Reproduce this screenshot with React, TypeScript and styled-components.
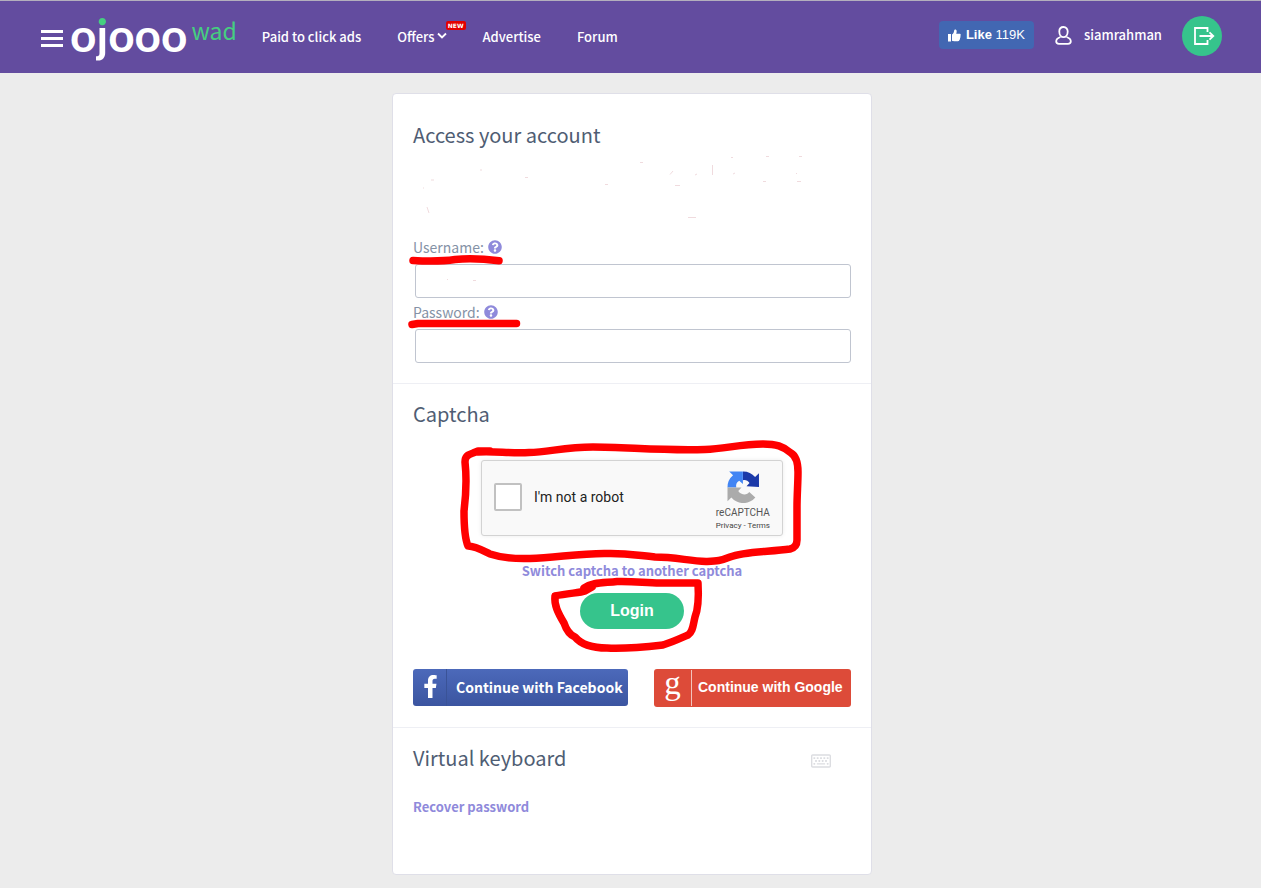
import React from "react";
import styled, { createGlobalStyle } from "styled-components";
import { FaFacebookF, FaQuestionCircle, FaRegKeyboard } from "react-icons/fa";

const sans = `"Source Sans Pro", "Noto Sans CJK JP", "Noto Sans", sans-serif`;
const arial = `"Liberation Sans", Arial, sans-serif`;
const violet = "#8f8adb";
const green = "#36c48c";

const GlobalStyle = createGlobalStyle`
  *, *::before, *::after { box-sizing: border-box; }
  body { margin: 0; background: #ececec; font-family: ${sans}; }
  button, input { font: inherit; margin: 0; }
  h2 { margin: 0; }
  a { text-decoration: none; }
`;

const Header = styled.header`
  display: flex;
  justify-content: space-between;
  height: 73px;
  padding: 0 39px 0 41px;
  border-top: 1px solid #b3afbd;
  background: #634c9f;
  color: #fff;
`;

const HeaderGroup = styled.div`
  display: flex;
  align-items: center;
`;

const MenuButton = styled.button`
  display: grid;
  gap: 4px;
  width: 22px;
  margin-top: 2px;
  padding: 0;
  border: 0;
  background: none;
  cursor: pointer;
`;

const MenuBar = styled.span`
  height: 3px;
  background: #fff;
`;

const Logo = styled.a`
  display: flex;
  align-items: flex-start;
  margin-left: 7px;
  padding-bottom: 4px;
  color: #fff;
`;

const LogoWord = styled.span`
  font: 700 46px/56px Lato, sans-serif;
`;

const LogoJ = styled.span`
  background: linear-gradient(#45cf80 0 21px, #fff 21px);
  background-clip: text;
  color: transparent;
`;

const LogoSuffix = styled.span`
  margin-left: 4px;
  color: #45cf80;
  font: 400 23px/46px ${sans};
`;

const Nav = styled.nav`
  display: flex;
  gap: 36px;
  margin-left: 25px;
`;

const NavLink = styled.a`
  position: relative;
  display: flex;
  align-items: center;
  gap: 2px;
  color: #fff;
  font-size: 13px;
  font-weight: 500;
  line-height: 20px;
`;

const NewBadge = styled.span`
  position: absolute;
  top: -6px;
  right: -19px;
  padding: 0 2px;
  border-radius: 2px;
  background: #e30000;
  font: 700 6px/9px "DejaVu Sans", sans-serif;
`;

const LikeButton = styled.button`
  display: flex;
  align-items: center;
  gap: 5px;
  height: 28px;
  margin-bottom: 4px;
  padding: 0 9px;
  border: 0;
  border-radius: 4px;
  background: #4267b2;
  color: #fff;
  font: 700 13px/20px ${arial};
  cursor: pointer;
`;

const LikeCount = styled.span`
  font-weight: 400;
`;

const UserLink = styled.a`
  display: flex;
  align-items: center;
  gap: 12px;
  margin: 0 20px 4px 21px;
  color: #fff;
  font-size: 13px;
  font-weight: 500;
  line-height: 20px;
`;

const LogoutButton = styled.button`
  display: grid;
  place-items: center;
  width: 40px;
  height: 40px;
  margin-bottom: 2px;
  padding: 0 0 0 4px;
  border: 0;
  border-radius: 50%;
  background: ${green};
  cursor: pointer;
`;

const Main = styled.main`
  padding: 20px 0 13px 3px;
`;

const Card = styled.form`
  position: relative;
  width: 100%;
  max-width: 480px;
  margin: 0 auto;
  border: 1px solid #dfdfe8;
  border-radius: 4px;
  background: #fff;
`;

const Section = styled.section<{ $top?: number; $bottom?: number }>`
  padding: ${(p) => p.$top ?? 16}px 20px ${(p) => p.$bottom ?? 20}px;
  & + & { border-top: 1px solid #eeeff4; }
`;

const Heading = styled.h2`
  color: #4f5d73;
  font-size: 20px;
  font-weight: 400;
  line-height: 28px;
`;

const HeadingRow = styled.div`
  display: flex;
  align-items: center;
  justify-content: space-between;
  padding-right: 20px;
  color: #dcdde1;
  svg { margin-top: 6px; }
`;

const Fields = styled.div`
  display: grid;
  gap: 2px;
  margin-top: 86px;
`;

const FieldLabel = styled.label`
  display: flex;
  align-items: center;
  gap: 4px;
  color: #8592a6;
  font-size: 14px;
  line-height: 24px;
  svg { color: ${violet}; }
`;

const TextInput = styled.input`
  display: block;
  width: calc(100% - 2px);
  height: 34px;
  margin: 5px 0 0 2px;
  padding: 0 10px;
  border: 1px solid #c0c5d0;
  border-radius: 3px;
  background: #fff;
`;

const Centered = styled.div`
  display: flex;
  flex-direction: column;
  align-items: center;
`;

const Captcha = styled.div`
  display: flex;
  align-items: center;
  justify-content: space-between;
  width: 302px;
  height: 76px;
  margin-top: 32px;
  padding: 0 12px;
  border: 1px solid #d3d3d3;
  border-radius: 3px;
  background: #f9f9f9;
  box-shadow: 0 0 4px rgba(0, 0, 0, 0.08);
  font-family: Roboto, sans-serif;
`;

const CaptchaLabel = styled.label`
  display: flex;
  align-items: center;
  gap: 12px;
  margin-bottom: 3px;
  color: #222;
  font-size: 14px;
  line-height: 20px;
`;

const CaptchaCheck = styled.input`
  appearance: none;
  width: 28px;
  height: 28px;
  border: 2px solid #c1c1c1;
  border-radius: 2px;
  background: #fff;
`;

const CaptchaBrand = styled.div`
  display: flex;
  flex-direction: column;
  align-items: center;
  padding-top: 5px;
  color: #555;
  font-size: 10px;
  line-height: 14px;
  svg { margin-bottom: 3px; }
`;

const CaptchaLegal = styled.div`
  font-size: 8px;
  line-height: 11px;
  a { color: #444; }
`;

const TextLink = styled.a`
  color: ${violet};
  font-size: 13px;
  font-weight: 700;
  line-height: 24px;
`;

const SwitchLink = styled(TextLink)`
  margin-top: 23px;
`;

const RecoverRow = styled.div`
  display: flex;
  margin-top: 23px;
`;

const LoginButton = styled.button`
  height: 36px;
  margin-top: 10px;
  padding: 0 30px;
  border: 0;
  border-radius: 18px;
  background: ${green};
  color: #fff;
  font: 700 16px/20px ${arial};
  cursor: pointer;
`;

const SocialRow = styled.div`
  display: flex;
  align-items: flex-start;
  justify-content: space-between;
  margin-top: 40px;
`;

const SocialButton = styled.button`
  display: flex;
  align-items: center;
  padding: 0;
  border: 0;
  border-radius: 3px;
  color: #fff;
  cursor: pointer;
`;

const FacebookButton = styled(SocialButton)`
  width: 215px;
  height: 37px;
  background: linear-gradient(#4c69ba, #3b55a0);
  font-size: 14px;
  font-weight: 700;
`;

const GoogleButton = styled(SocialButton)`
  width: 197px;
  height: 38px;
  background: #dd4b39;
  font: 700 14px/20px ${arial};
`;

const FacebookMark = styled.span`
  display: grid;
  place-items: center;
  width: 34px;
  height: 37px;
  margin-right: 9px;
  padding: 0 0 2px 2px;
  border-right: 1px solid #3a5397;
`;

const GoogleMark = styled.span`
  width: 38px;
  height: 36px;
  margin-right: 6px;
  border-right: 1px solid #f3c3bc;
  font: 400 33px/26px "Liberation Serif", serif;
`;

const ButtonText = styled.span`
  padding-bottom: 2px;
`;

const Markup = styled.svg`
  position: absolute;
  top: -1px;
  left: -1px;
  pointer-events: none;
`;

const UserIcon = () => (
  <svg width="17" height="19" viewBox="0 0 17 19" fill="none" stroke="#fff" strokeWidth="1.8" aria-hidden="true">
    <path d="M8.5 1C5.8 1 4.300 3 4.300 5.600C4.300 8.800 6.200 11.200 8.500 11.200S12.700 8.800 12.700 5.600C12.700 3 11.200 1 8.500 1Z" />
    <path d="M5.500 11C3 11.800 1.200 13 1.200 15.300C1.200 17.200 2.400 17.800 4 17.800H13C14.600 17.800 15.800 17.200 15.800 15.300C15.800 13 14 11.800 11.500 11" />
  </svg>
);

const LogoutIcon = () => (
  <svg width="22" height="18" viewBox="0 0 22 18" fill="none" stroke="#fff" strokeWidth="1.8" aria-hidden="true">
    <path d="M14.500 5V1H2V17H14.500V13" />
    <path d="M6.500 9H20M16.500 5.300L20.300 9L16.500 12.700" />
  </svg>
);

const LikeIcon = () => (
  <svg width="13" height="13" viewBox="0 0 13 13" fill="#fff" aria-hidden="true">
    <path d="M0 5H3V12.500H0ZM4 5.500C5.500 4.500 6 3.300 6.200 1.300C6.300 0 8.700 0 8.700 2.300C8.700 3.300 8.500 4 8.200 4.700H11.500C13 4.700 13.100 6.500 12.200 6.900C12.900 7.500 12.700 8.700 11.900 9C12.300 9.700 12 10.600 11.300 10.900C11.400 11.800 10.900 12.300 10 12.300H6.500C5.500 12.300 5 11.800 4 11.700Z" />
  </svg>
);

const RecaptchaIcon = () => (
  <svg width="32" height="32" viewBox="0 0 64 64" aria-hidden="true">
    <path fill="#1c3aa9" d="M64 32L63.900 4.500L56.200 12.200A31 31 0 0 0 32 1V18.500C35 17 42 18 45 24L39 30.500Z" />
    <path fill="#4285f4" d="M31.800 1H4.400L12.100 8.700A31 31 0 0 0 1 32.900H18.500C17.500 27 19 22 24.500 19.500L31.800 26Z" />
    <path fill="#ababab" d="M1 33V60.500L8.700 52.800A31 31 0 0 0 56.700 52.800L44.500 42C41 47 35 48.500 28 45C25.500 43.700 24 42 22.500 40L29 33Z" />
  </svg>
);

const Chevron = () => (
  <svg width="10" height="10" viewBox="0 0 10 10" fill="none" stroke="#fff" strokeWidth="1.8" aria-hidden="true">
    <path d="M1 1.500L5 5.500L9 1.500" />
  </svg>
);

/* Hand-drawn highlights over the form, plus the faint marks beside the heading. */
const Annotations = () => (
  <Markup width="480" height="782" viewBox="392 93 480 782" fill="none" stroke="#f00" strokeWidth="7.5" strokeLinecap="round" strokeLinejoin="round" aria-hidden="true">
    <path d="M413 260.500C432 261.500 445 261 455 259.500C470 258 485 259 499 260.800" />
    <path d="M412 324.500L418 323.500H516.500" />
    <path d="M490 451L478 451L473 453C467 455 465 457 465 462C467 480 466 495 464 511C464 525 465 539 468 546C475 546 482 550 490 554C502 558 515 559 530 558.500C555 558 580 553 607 553.500C625 553 635 555 655 557C675 557 689 561 706 561.500C717 561 720 561 730 557C745 551 770 552 790 549C794 548 797 545 797 540V507C797 495 798 483 798 472C798 462 796 456 791 453C783 446 776 444 763 444C740 444 725 449 705 449.500C665 451 625 447 593 447C565 447 549 452 529 452.500C510 453.500 495 451 478 452" />
    <path d="M584 588C592 582 604 583 617 581.500C635 581 645 583 660 583L698 583C699 600 697 612 695 617C693 625 693 632 688 635C681 638 673 642 663 645C645 647 625 649 607 648C590 648 580 643 575 637C570 635 566 629 564 623C558 613 554 605 555 596C568 593 580 593 585 591L592 587" />
    <g stroke="#d9a5ad" strokeWidth="1" strokeLinecap="butt" opacity="0.4">
      <path d="M431 180H434M423 188H424M480 170H482M525 177.500H528M605 184.500H608M640 162.500H643M670 174.500L673 171M695 175L697 174M712.500 165V175M731 157.500H733M733 174L735 173M766 156.500H769M763 181.500H766M799 156.500H802M797 181.500H801M796 173.500H797M675 185.500H680M688 217.500H696M427 207L429 213M447 279.500H448M473 280.500H476" />
    </g>
  </Markup>
);

const Field = ({ id, label, type }: { id: string; label: string; type: string }) => (
  <div>
    <FieldLabel htmlFor={id}>
      {label} <FaQuestionCircle size={14} aria-hidden="true" />
    </FieldLabel>
    <TextInput id={id} name={id} type={type} />
  </div>
);

export default function App() {
  return (
    <>
      <GlobalStyle />
      <Header>
        <HeaderGroup>
          <MenuButton type="button" aria-label="Menu">
            <MenuBar /><MenuBar /><MenuBar />
          </MenuButton>
          <Logo href="#">
            <LogoWord>o<LogoJ>j</LogoJ>ooo</LogoWord>
            <LogoSuffix>wad</LogoSuffix>
          </Logo>
          <Nav>
            <NavLink href="#">Paid to click ads</NavLink>
            <NavLink href="#">Offers<Chevron /><NewBadge>NEW</NewBadge></NavLink>
            <NavLink href="#">Advertise</NavLink>
            <NavLink href="#">Forum</NavLink>
          </Nav>
        </HeaderGroup>
        <HeaderGroup>
          <LikeButton type="button"><LikeIcon /><span>Like <LikeCount>119K</LikeCount></span></LikeButton>
          <UserLink href="#"><UserIcon />siamrahman</UserLink>
          <LogoutButton type="button" aria-label="Log out"><LogoutIcon /></LogoutButton>
        </HeaderGroup>
      </Header>
      <Main>
        <Card onSubmit={(e) => e.preventDefault()}>
          <Section $top={27}>
            <Heading>Access your account</Heading>
            <Fields>
              <Field id="username" label="Username:" type="text" />
              <Field id="password" label="Password:" type="password" />
            </Fields>
          </Section>
          <Section>
            <Heading>Captcha</Heading>
            <Centered>
              <Captcha>
                <CaptchaLabel><CaptchaCheck type="checkbox" />I'm not a robot</CaptchaLabel>
                <CaptchaBrand>
                  <RecaptchaIcon />
                  <span>reCAPTCHA</span>
                  <CaptchaLegal><a href="#">Privacy</a> - <a href="#">Terms</a></CaptchaLegal>
                </CaptchaBrand>
              </Captcha>
              <SwitchLink href="#">Switch captcha to another captcha</SwitchLink>
              <LoginButton type="submit">Login</LoginButton>
            </Centered>
            <SocialRow>
              <FacebookButton type="button">
                <FacebookMark><FaFacebookF size={23} aria-hidden="true" /></FacebookMark>
                <ButtonText>Continue with Facebook</ButtonText>
              </FacebookButton>
              <GoogleButton type="button">
                <GoogleMark aria-hidden="true">g</GoogleMark>
                <ButtonText>Continue with Google</ButtonText>
              </GoogleButton>
            </SocialRow>
          </Section>
          <Section $bottom={55}>
            <HeadingRow>
              <Heading>Virtual keyboard</Heading>
              <FaRegKeyboard size={20} aria-hidden="true" />
            </HeadingRow>
            <RecoverRow><TextLink href="#">Recover password</TextLink></RecoverRow>
          </Section>
          <Annotations />
        </Card>
      </Main>
    </>
  );
}
